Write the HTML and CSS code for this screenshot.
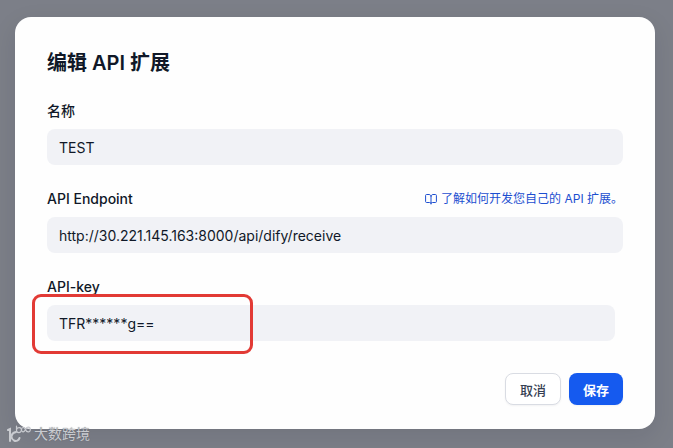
FILE: index.html
```
<!DOCTYPE html>
<html lang="zh-CN">
<head>
  <meta charset="UTF-8">
  <meta name="viewport" content="width=device-width, initial-scale=1.0">
  <title>编辑 API 扩展</title>
  <link rel="stylesheet" href="styles.css">
</head>
<body>
  <form class="modal">
    <h1 class="title">编辑 API 扩展</h1>

    <div class="form-group">
      <div class="label-row">
        <label for="name">名称</label>
      </div>
      <input type="text" id="name" name="name" value="TEST">
    </div>

    <div class="form-group">
      <div class="label-row">
        <label for="endpoint">API Endpoint</label>
        <a class="help-link" href="#">
          <svg class="book-icon" viewBox="0 0 12 12" fill="none" stroke="currentColor" stroke-linecap="round" stroke-linejoin="round">
            <path d="M6 11V3.500C6 2.500 5.200 1.500 4 1.500H1.500C1 1.500 .6 1.800 .6 2.400V8.600C.6 9.200 1 9.500 1.500 9.500H4.500C5.300 9.500 6 9.800 6 10.500C6 9.800 6.700 9.500 7.500 9.500H10.500C11 9.500 11.400 9.200 11.400 8.600V2.400C11.400 1.800 11 1.500 10.500 1.500H8C6.800 1.500 6 2.500 6 3.500"/>
          </svg>
          <span>了解如何开发您自己的 API 扩展。</span>
        </a>
      </div>
      <input type="text" id="endpoint" name="endpoint" value="http://30.221.145.163:8000/api/dify/receive">
    </div>

    <div class="form-group key-group">
      <div class="label-row">
        <label for="api-key">API-key</label>
      </div>
      <input type="text" id="api-key" name="api-key" value="TFR******g==">
      <div class="highlight"></div>
    </div>

    <div class="actions">
      <button type="button" class="btn">取消</button>
      <button type="submit" class="btn btn-primary">保存</button>
    </div>
  </form>

  <div class="watermark">
    <svg class="watermark-logo" viewBox="0 0 24 18" fill="none" stroke="currentColor" stroke-linecap="round">
      <path stroke-width="2" d="M1 5L3 4V16M9 7C4 8 3 13 7 15.500C9 16.500 12 15.500 12.500 13"/>
      <path stroke-width="1.200" d="M9.500 1V5C9.500 8.500 14 8.500 14.500 5C14.500 2 10.500 2 9.500 4.500"/>
      <path stroke-width="1.200" d="M18.500 4.500C17 1.500 14.500 2 14.500 5C15 8 17.500 7 18.500 4.500C19.500 1 23.300 1.500 23.300 4.500C23.300 8 19.500 7.500 18.500 4.500Z"/>
    </svg>
    <span>大数跨境</span>
  </div>
</body>
</html>
```

FILE: styles.css
```
* {
  box-sizing: border-box;
}
body {
  margin: 0;
  min-height: 100vh;
  padding: 17px 18px 19px 15px;
  background-color: #7c7f88;
  color: #101828;
  font-family: Inter, "Noto Sans CJK SC", sans-serif;
  font-size: 14px;
  line-height: 20px;
}
.modal {
  max-width: 640px;
  padding: 32px 32px 24px;
  background-color: #fefefe;
  border-radius: 16px;
  box-shadow: 0 8px 24px rgba(16, 24, 40, 0.1);
}
.title {
  margin: 0 0 24px;
  font-size: 20px;
  font-weight: 600;
  line-height: 28px;
}
.form-group {
  position: relative;
  margin-bottom: 24px;
}
.label-row {
  display: flex;
  align-items: center;
  justify-content: space-between;
  height: 20px;
  margin-bottom: 8px;
}
label {
  font-weight: 500;
}
input {
  display: block;
  width: 100%;
  height: 36px;
  padding: 0 12px;
  border: none;
  border-radius: 8px;
  background-color: #f1f2f6;
  color: #101828;
  font-family: inherit;
  font-size: 14px;
}
.help-link {
  display: flex;
  align-items: center;
  gap: 4px;
  color: #1c4ed0;
  font-size: 12px;
  text-decoration: none;
}
.book-icon {
  width: 12px;
  height: 12px;
}
.key-group {
  margin-bottom: 32px;
  padding-right: 8px;
}
/* red frame over the key field */
.highlight {
  position: absolute;
  top: 17px;
  left: -15px;
  width: 221px;
  height: 60px;
  border: 3px solid #e23a35;
  border-radius: 9px;
  pointer-events: none;
}
.actions {
  display: flex;
  justify-content: flex-end;
  gap: 8px;
}
.btn {
  height: 32px;
  padding: 0 14px;
  border: 1px solid #d9dce3;
  border-radius: 8px;
  background-color: #fff;
  box-shadow: 0 1px 2px rgba(16, 24, 40, 0.05);
  color: #354052;
  font-family: inherit;
  font-size: 13px;
  font-weight: 500;
  cursor: pointer;
}
.btn-primary {
  border: none;
  background-color: #155aef;
  color: #fff;
  font-weight: 700;
}
.watermark {
  position: absolute;
  bottom: 4px;
  left: 7px;
  display: flex;
  align-items: center;
  gap: 3px;
  color: #c9cbd0;
  font-size: 14px;
  text-shadow: 0 0 1px #5c5f67;
}
.watermark-logo {
  width: 24px;
  height: 18px;
}
```
